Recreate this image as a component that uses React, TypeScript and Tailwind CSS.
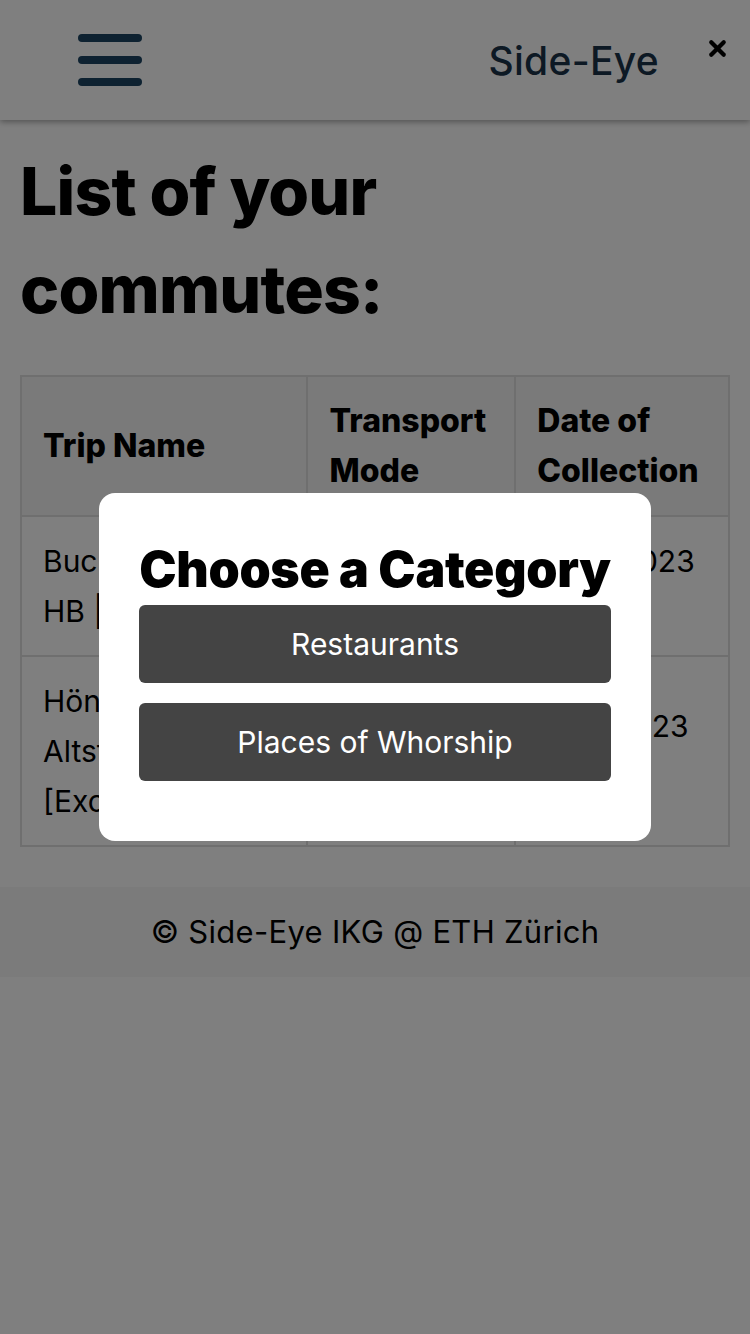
import { X } from "lucide-react";

const commutes = [
  {
    name: "Bucheggplatz – HB | Work",
    mode: "Tram",
    date: "12.05.2023",
    time: "08:14",
  },
  {
    name: "Hönggerberg – Altstetten [Excursion]",
    mode: "Bus",
    date: "11.05.2023",
    time: "17:32",
  },
];

const poppins = "font-['Inter','Open_Sans',sans-serif]";

const App = () => {
  return (
    <div className={`relative min-h-[1334px] w-[750px] bg-white ${poppins}`}>
      <header className="flex h-[120px] items-center justify-between bg-white pl-[78px] pr-[20px] shadow-[0_2px_6px_rgba(0,0,0,0.35)]">
        <div className="flex flex-col gap-[14px]">
          <span className="block h-[8px] w-[64px] rounded-full bg-[#1c4462]"></span>
          <span className="block h-[8px] w-[64px] rounded-full bg-[#1c4462]"></span>
          <span className="block h-[8px] w-[64px] rounded-full bg-[#1c4462]"></span>
        </div>
        <div className="flex items-start gap-[46px]">
          <span className="mt-[2px] text-[39px] font-medium tracking-[0.3px] text-[#1a3349]">Side-Eye</span>
          <X className="mt-[6px] h-[25px] w-[25px] text-black" strokeWidth={4} />
        </div>
      </header>

      <main className="px-[20px] pb-[40px]">
        <h1 className="mt-[22px] text-[66px] font-extrabold leading-[98px] tracking-[-0.8px] text-black">
          List of your
          <br />
          commutes:
        </h1>

        <table className="mt-[37px] w-[710px] border-collapse border-2 border-[#dedede] text-[30px] leading-[50px] text-black">
          <thead>
            <tr className="bg-[#f4f4f4]">
              <th className="w-[288px] border-2 border-[#dedede] px-[21px] py-[19px] text-left align-middle text-[32px] font-extrabold">Trip Name</th>
              <th className="w-[208px] border-2 border-[#dedede] px-[21px] py-[19px] text-left align-middle text-[32px] font-extrabold">Transport Mode</th>
              <th className="w-[214px] border-2 border-[#dedede] px-[21px] py-[19px] text-left align-middle text-[32px] font-extrabold">Date of Collection</th>
            </tr>
          </thead>
          <tbody>
            {commutes.map((c) => (
              <tr key={c.name}>
                <td className="border-2 border-[#dedede] px-[21px] py-[19px] align-middle">{c.name}</td>
                <td className="border-2 border-[#dedede] px-[21px] py-[19px] align-middle">{c.mode}</td>
                <td className="border-2 border-[#dedede] px-[21px] py-[19px] align-middle">
                  {c.date}
                  <br />
                  {c.time}
                </td>
              </tr>
            ))}
          </tbody>
        </table>
      </main>

      <footer className="flex h-[90px] items-center justify-center bg-[#f6f6f6] text-[31px] tracking-[0.3px] text-black">
        © Side-Eye IKG @ ETH Zürich
      </footer>

      <div className="fixed inset-0 flex items-center justify-center bg-black/50">
        <div className="w-[552px] rounded-[16px] bg-white px-[40px] pb-[60px] pt-[40px]">
          <h2 className="whitespace-nowrap text-center text-[50px] font-black leading-[72px] tracking-[-0.3px] text-black">Choose a Category</h2>
          <div className="flex flex-col gap-[20px] font-['Inter','Liberation_Sans',sans-serif]">
            <button className="h-[78px] w-full rounded-[6px] bg-[#444444] text-[30px] text-white">Restaurants</button>
            <button className="h-[78px] w-full rounded-[6px] bg-[#444444] text-[30px] text-white">Places of Whorship</button>
          </div>
        </div>
      </div>
    </div>
  );
};

export default App;
